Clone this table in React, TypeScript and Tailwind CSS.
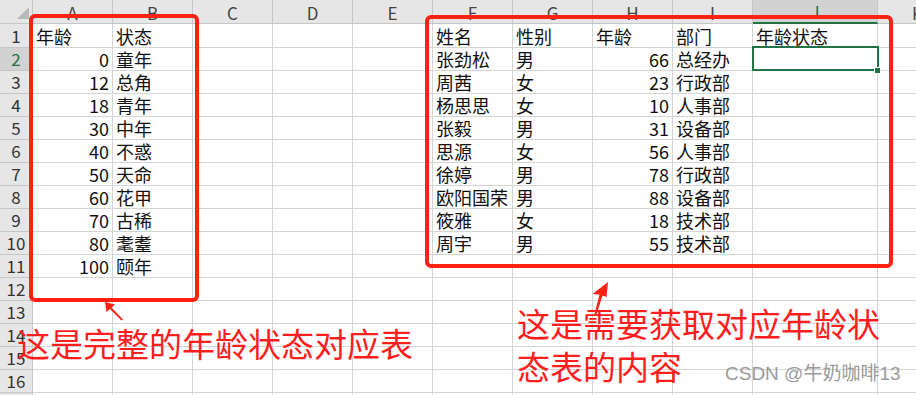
import React from "react";

const cols: { k: string; w: string }[] = [
  { k: "A", w: "w-[80px]" },
  { k: "B", w: "w-[80px]" },
  { k: "C", w: "w-[80px]" },
  { k: "D", w: "w-[80px]" },
  { k: "E", w: "w-[80px]" },
  { k: "F", w: "w-[80px]" },
  { k: "G", w: "w-[80px]" },
  { k: "H", w: "w-[80px]" },
  { k: "I", w: "w-[80px]" },
  { k: "J", w: "w-[125px]" },
  { k: "K", w: "w-[80px]" },
];

const left: [string, string][] = [
  ["0", "童年"],
  ["12", "总角"],
  ["18", "青年"],
  ["30", "中年"],
  ["40", "不惑"],
  ["50", "天命"],
  ["60", "花甲"],
  ["70", "古稀"],
  ["80", "耄耋"],
  ["100", "颐年"],
];

const people: [string, string, string, string][] = [
  ["张劲松", "男", "66", "总经办"],
  ["周茜", "女", "23", "行政部"],
  ["杨思思", "女", "10", "人事部"],
  ["张毅", "男", "31", "设备部"],
  ["思源", "女", "56", "人事部"],
  ["徐婷", "男", "78", "行政部"],
  ["欧阳国荣", "男", "88", "设备部"],
  ["筱雅", "女", "18", "技术部"],
  ["周宇", "男", "55", "技术部"],
];

type Cell = { t: string; num?: boolean };

function cellFor(row: number, col: string): Cell | null {
  if (row === 1) {
    const m: Record<string, string> = {
      A: "年龄",
      B: "状态",
      F: "姓名",
      G: "性别",
      H: "年龄",
      I: "部门",
      J: "年龄状态",
    };
    return m[col] ? { t: m[col] } : null;
  }
  const li = row - 2;
  if (li >= 0 && li < left.length) {
    if (col === "A") return { t: left[li][0], num: true };
    if (col === "B") return { t: left[li][1] };
  }
  if (li >= 0 && li < people.length) {
    if (col === "F") return { t: people[li][0] };
    if (col === "G") return { t: people[li][1] };
    if (col === "H") return { t: people[li][2], num: true };
    if (col === "I") return { t: people[li][3] };
  }
  return null;
}

const rows = Array.from({ length: 17 }, (_, i) => i + 1);

const cellFont = {
  fontFamily: '"Noto Sans CJK SC", "Noto Sans", sans-serif',
};

export default function App() {
  return (
    <div
      className="relative w-[916px] h-[395px] overflow-hidden bg-white text-[#111]"
      style={cellFont}
    >
      {/* header row */}
      <div className="flex h-[24px]">
        <div className="relative w-[33px] shrink-0 h-full bg-[#e6e6e6] border-r border-b border-[#c6c6c6]">
          <svg className="absolute left-0 top-0" width="33" height="24">
            <polygon points="17,19 29,19 29,7" fill="#b9b9b9" />
          </svg>
        </div>
        {cols.map((c) => (
          <div
            key={c.k}
            className={`${c.w} shrink-0 h-full flex items-center justify-center pt-[2px] text-[17px] leading-[20px] ${
              c.k === "J"
                ? "bg-[#d2d2d2] border-r border-[#c6c6c6] border-b-2 border-b-[#217346] text-[#217346]"
                : "bg-[#e6e6e6] border-r border-b border-[#c6c6c6] text-[#444]"
            }`}
          >
            {c.k}
          </div>
        ))}
      </div>

      {rows.map((r) => (
        <div key={r} className={`flex ${r === 1 ? "h-[24px]" : "h-[23px]"}`}>
          <div
            className={`w-[33px] shrink-0 h-full flex items-end justify-center pb-[1px] text-[17px] leading-[20px] border-r border-b border-[#c6c6c6] ${
              r === 2 ? "bg-[#d2d2d2] text-[#217346]" : "bg-[#e6e6e6] text-[#333]"
            }`}
          >
            {r}
          </div>
          {cols.map((c) => {
            const cell = cellFor(r, c.k);
            return (
              <div
                key={c.k}
                className={`${c.w} shrink-0 h-full flex items-end pb-[1px] px-[3px] border-r border-b border-[#d4d4d4] text-[18px] leading-[20px] whitespace-nowrap ${
                  cell?.num ? "justify-end" : "justify-start"
                }`}
              >
                {cell?.t ?? ""}
              </div>
            );
          })}
        </div>
      ))}

      {/* selected cell J2 */}
      <div className="absolute left-[752px] top-[46px] w-[127px] h-[25px] border-2 border-[#217346]" />
      <div className="absolute left-[874px] top-[67px] w-[7px] h-[7px] bg-[#217346] border border-white" />

      {/* red annotation boxes */}
      <div className="absolute left-[29px] top-[14px] w-[170px] h-[288px] border-4 border-[#ff2214] rounded-[6px]" />
      <div className="absolute left-[425px] top-[15px] w-[468px] h-[253px] border-4 border-[#ff2214] rounded-[6px]" />

      {/* arrows */}
      <svg className="absolute left-0 top-0 pointer-events-none" width="916" height="395">
        <polygon
          points="105,302 106.5,312 110,309 121.5,320.5 123,319.5 111.5,307.5 115,304.5"
          fill="#ff2214"
        />
        <polygon
          points="608,282 592.5,294 599.5,294.5 594,316 596,316 602.5,295.5 606.5,297"
          fill="#ff2214"
        />
      </svg>

      {/* annotation texts */}
      <div className="absolute left-[17px] top-[327px] text-[33px] leading-[33px] text-[#ff1e1e] whitespace-nowrap">
        这是完整的年龄状态对应表
      </div>
      <div className="absolute left-[517px] top-[302px] text-[33px] leading-[43px] text-[#ff1e1e] whitespace-nowrap">
        这是需要获取对应年龄状
        <br />
        态表的内容
      </div>

      {/* watermark */}
      <div
        className="absolute left-[725px] top-[362px] text-[19px] leading-[24px] text-[#9a9a9a] whitespace-nowrap"
        style={{ fontFamily: '"Liberation Sans", "Noto Sans CJK SC", sans-serif' }}
      >
        CSDN @牛奶咖啡13
      </div>
    </div>
  );
}
